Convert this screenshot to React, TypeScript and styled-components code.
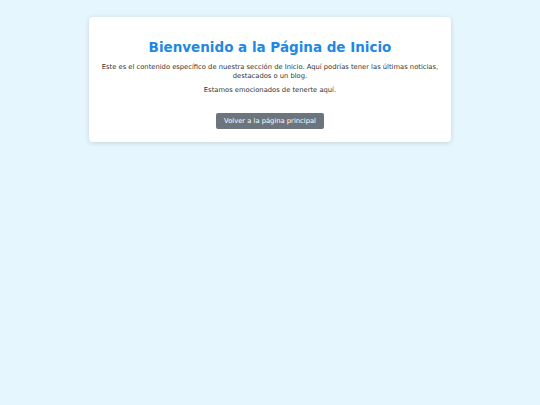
import styled, { createGlobalStyle } from "styled-components";

const GlobalStyle = createGlobalStyle`
  html, body {
    margin: 0;
    padding: 0;
    background: #e6f6ff;
    font-family: "DejaVu Sans", Verdana, sans-serif;
  }
`;

export default function App() {
  return (
    <>
      <GlobalStyle />
      <Page>
        <Card>
          <Title>Bienvenido a la Página de Inicio</Title>
          <Text>
            Este es el contenido específico de nuestra sección de Inicio. Aquí podrías tener las
            últimas noticias, destacados o un blog.
          </Text>
          <Text>Estamos emocionados de tenerte aquí.</Text>
          <BackButton type="button">Volver a la página principal</BackButton>
        </Card>
      </Page>
    </>
  );
}

const Page = styled.main`
  min-height: 405px;
  padding-top: 17px;
  box-sizing: border-box;
`;

const Card = styled.section`
  width: 362px;
  margin: 0 auto;
  box-sizing: border-box;
  padding: 20px 10px 13px;
  background: #ffffff;
  border-radius: 4px;
  box-shadow: 0 1px 5px rgba(0, 0, 0, 0.15);
  text-align: center;
`;

const Title = styled.h1`
  margin: 0 0 6px;
  color: #1e88e5;
  font-size: 13.5px;
  font-weight: 700;
  line-height: 20px;
`;

const Text = styled.p`
  margin: 0 0 5px;
  color: #333333;
  font-size: 6.75px;
  line-height: 9px;
`;

const BackButton = styled.button`
  margin-top: 13px;
  height: 16px;
  padding: 0 8px;
  border: none;
  border-radius: 2px;
  background: #6c757d;
  color: #ffffff;
  font-family: inherit;
  font-size: 6.75px;
  cursor: pointer;
`;
